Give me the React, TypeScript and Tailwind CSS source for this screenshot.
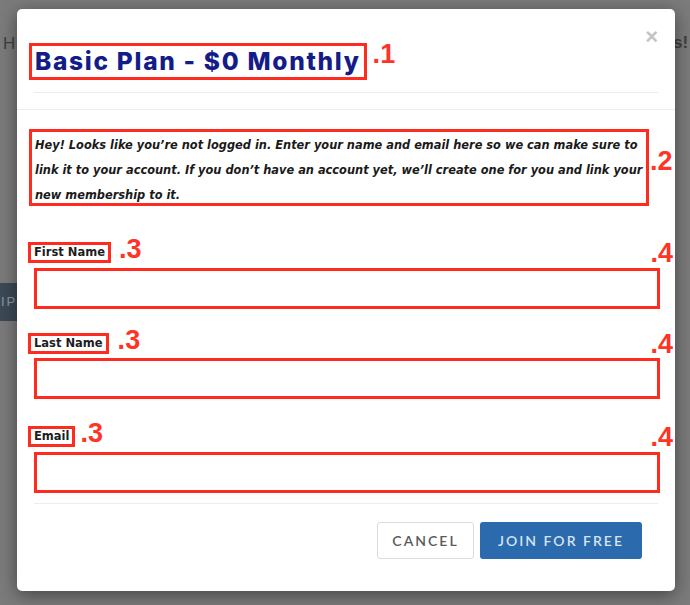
import React from "react";

const RED = "border-[3px] border-[#ff2b1f]";

function Mark({ n, className = "" }: { n: string; className?: string }) {
  return (
    <span
      className={`relative font-['Liberation_Sans',Arial,sans-serif] text-[27px] font-bold leading-none text-[#ff3326] ${className}`}
    >
      .{n}
    </span>
  );
}

function Field({ label, labelMt, inputMt, markMl }: { label: string; labelMt: string; inputMt: string; markMl: string }) {
  return (
    <div className={labelMt}>
      <div className="ml-[11px] mr-[2px] flex h-[21px] items-center justify-between">
        <div className="flex items-center">
          <span
            className={`${RED} flex h-[21px] items-center px-[3px] font-['DejaVu_Sans',sans-serif] text-[11.5px] font-bold text-[#1d1d1d]`}
          >
            {label}
          </span>
          <Mark n="3" className={`${markMl} -top-[3px]`} />
        </div>
        <Mark n="4" className="top-[1px]" />
      </div>
      <div className={`${inputMt} ml-[17px] mr-[15px] h-[41px] ${RED} bg-white`} />
    </div>
  );
}

export default function App() {
  return (
    <div className="relative h-[605px] w-[690px] overflow-hidden bg-[#7b7b7b] font-['Liberation_Sans',Arial,sans-serif]">
      {/* page behind the overlay */}
      <span className="absolute left-[3px] top-[31px] text-[17px] text-[#3f3f3f]">H</span>
      <span className="absolute left-[673px] top-[30px] text-[17px] font-bold text-[#3f3f3f]">s!</span>
      <div className="absolute left-0 top-[283px] flex h-[38px] w-[17px] items-center bg-[#3c4a56] pl-[1px] text-[13px] tracking-[2px] text-[#8d98a1]">
        IP
      </div>

      <div className="absolute left-[17px] top-[9px] flex h-[582px] w-[658px] flex-col rounded-[5px] bg-white shadow-[0_4px_18px_rgba(0,0,0,0.45)]">
        <button className="absolute right-[17px] top-[17px] text-[22px] font-bold leading-none text-[#c4c4c4]">×</button>

        <div className="border-b border-[#ececec] px-[17px] pb-[16px] pt-[34px]">
          <div className="-ml-[5px] flex h-[37px] items-center">
            <div className={`${RED} flex h-[37px] items-center px-[3px]`}>
              <h1 className="font-['Inter',sans-serif] text-[24.5px] font-extrabold leading-none tracking-[1.7px] text-[#141c88]">
                Basic Plan - $0 Monthly
              </h1>
            </div>
            <Mark n="1" className="-top-[7px] ml-[6px]" />
          </div>
          <div className="mt-[12px] h-px bg-[#ececec]" />
        </div>

        <div className="flex flex-1 flex-col">
          <div className="ml-[12px] mt-[19px] flex h-[77px] items-center">
            <p
              className={`${RED} h-[77px] w-[620px] px-[3px] pt-[1px] font-['DejaVu_Sans',sans-serif] text-[11.4px] font-bold italic leading-[25px] text-[#1a1a1a]`}
            >
              Hey! Looks like you’re not logged in. Enter your name and email here so we can make sure to link it to
              your account. If you don’t have an account yet, we’ll create one for you and link your new membership to
              it.
            </p>
            <Mark n="2" className="-top-[6px] ml-[1px]" />
          </div>

          <Field label="First Name" labelMt="mt-[36px]" inputMt="mt-[5px]" markMl="ml-[8px]" />
          <Field label="Last Name" labelMt="mt-[24px]" inputMt="mt-[4px]" markMl="ml-[9px]" />
          <Field label="Email" labelMt="mt-[27px]" inputMt="mt-[5px]" markMl="ml-[5px]" />

          <div className="mx-[17px] mt-[10px] h-px bg-[#ececec]" />

          <div className="mr-[33px] mt-[18px] flex justify-end gap-[6px] font-['Lato',sans-serif] text-[14px] font-semibold tracking-[2px]">
            <button className="h-[37px] w-[97px] rounded-[3px] border border-[#dcdcdc] bg-white uppercase text-[#5a5a5a]">
              Cancel
            </button>
            <button className="h-[37px] w-[162px] rounded-[3px] bg-[#2a6aad] uppercase text-[#d6e3f0]">
              Join for free
            </button>
          </div>
        </div>
      </div>
    </div>
  );
}
